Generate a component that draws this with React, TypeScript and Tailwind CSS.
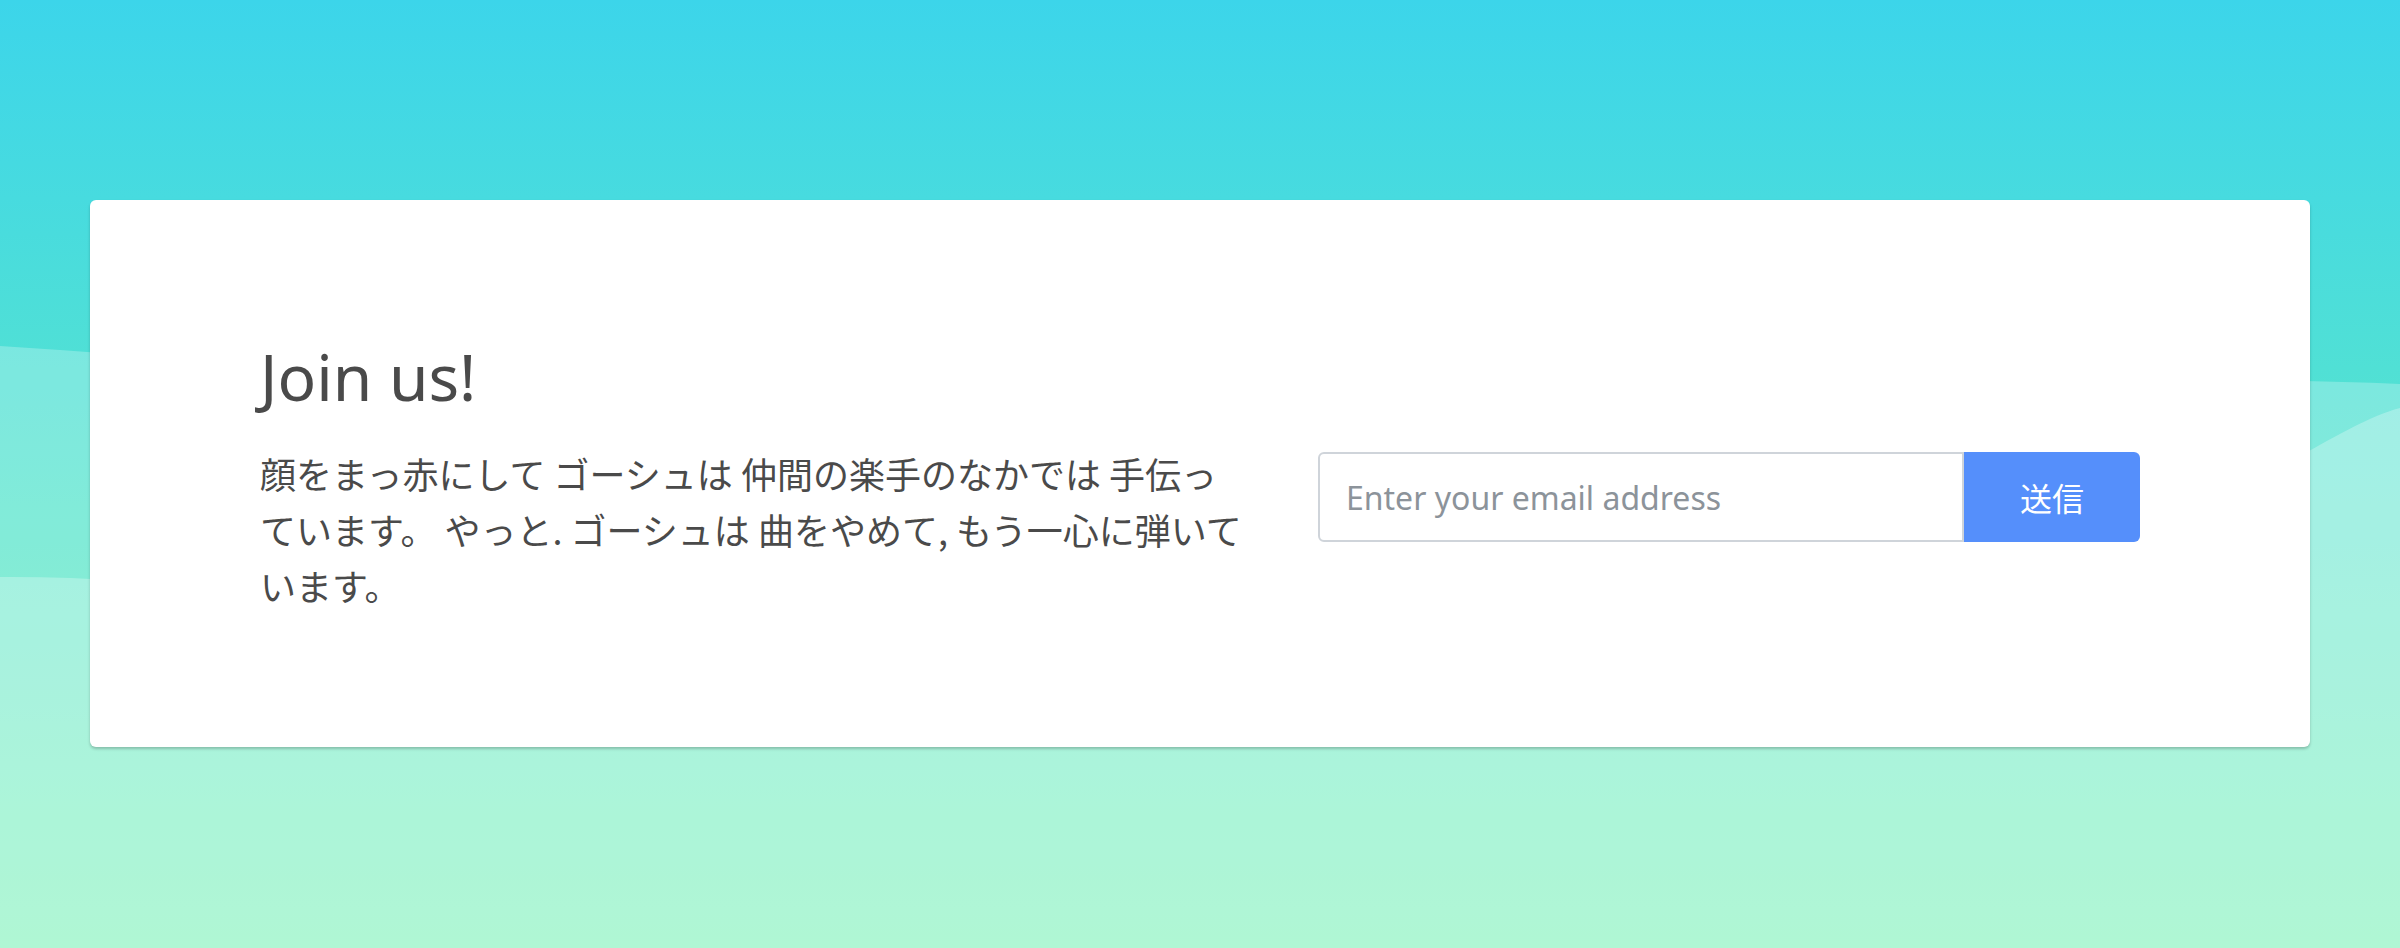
export default function App() {
  return (
    <main className="relative min-h-screen overflow-hidden bg-gradient-to-b from-[#3cd5ea] to-[#6df0b0] font-['Noto_Sans','Noto_Sans_CJK_JP',sans-serif]">
      {/* Waves */}
      <svg
        className="absolute inset-0 w-full h-full"
        viewBox="0 0 2400 948"
        preserveAspectRatio="none"
      >
        <path
          d="M0,346 C400,370 800,440 1300,420 C1800,400 2100,370 2400,384 L2400,948 L0,948 Z"
          fill="#ffffff"
          fillOpacity="0.25"
        />
        <path
          d="M0,577 C300,575 600,660 1100,660 C1600,660 2100,560 2300,456 C2340,434 2370,416 2400,408 L2400,948 L0,948 Z"
          fill="#ffffff"
          fillOpacity="0.28"
        />
      </svg>

      {/* Card */}
      <section className="relative pt-[200px] px-[90px]">
        <div className="bg-white rounded-md shadow-[0_2px_3px_rgba(0,0,0,0.22)] pt-[141px] pb-[134px] px-[170px]">
          <div className="flex gap-[58px] items-start">
            <div className="w-[990px] shrink-0 text-[#4a4a4a]">
              <h1 className="text-[64px] leading-[72px] font-normal">
                Join us!
              </h1>
              <p className="mt-[32px] text-[36px] leading-[56px] font-['Noto_Sans_CJK_JP','Noto_Sans',sans-serif]">
                顔をまっ赤にして ゴーシュは 仲間の楽手のなかでは 手伝っています。 やっと. ゴーシュは 曲をやめて, もう一心に弾いています。
              </p>
            </div>
            <form className="flex flex-1 mt-[111px] ml-[10px]">
              <input
                type="email"
                placeholder="Enter your email address"
                className="flex-1 h-[90px] border-2 border-[#cfd4da] rounded-l-md pl-[26px] text-[32px] text-[#4a4a4a] placeholder:text-[#8c939a] outline-none"
              />
              <button
                type="button"
                className="w-[176px] h-[90px] bg-[#558ffb] text-white text-[32px] rounded-r-md font-['Noto_Sans_CJK_JP',sans-serif]"
              >
                送信
              </button>
            </form>
          </div>
        </div>
      </section>
    </main>
  );
}
